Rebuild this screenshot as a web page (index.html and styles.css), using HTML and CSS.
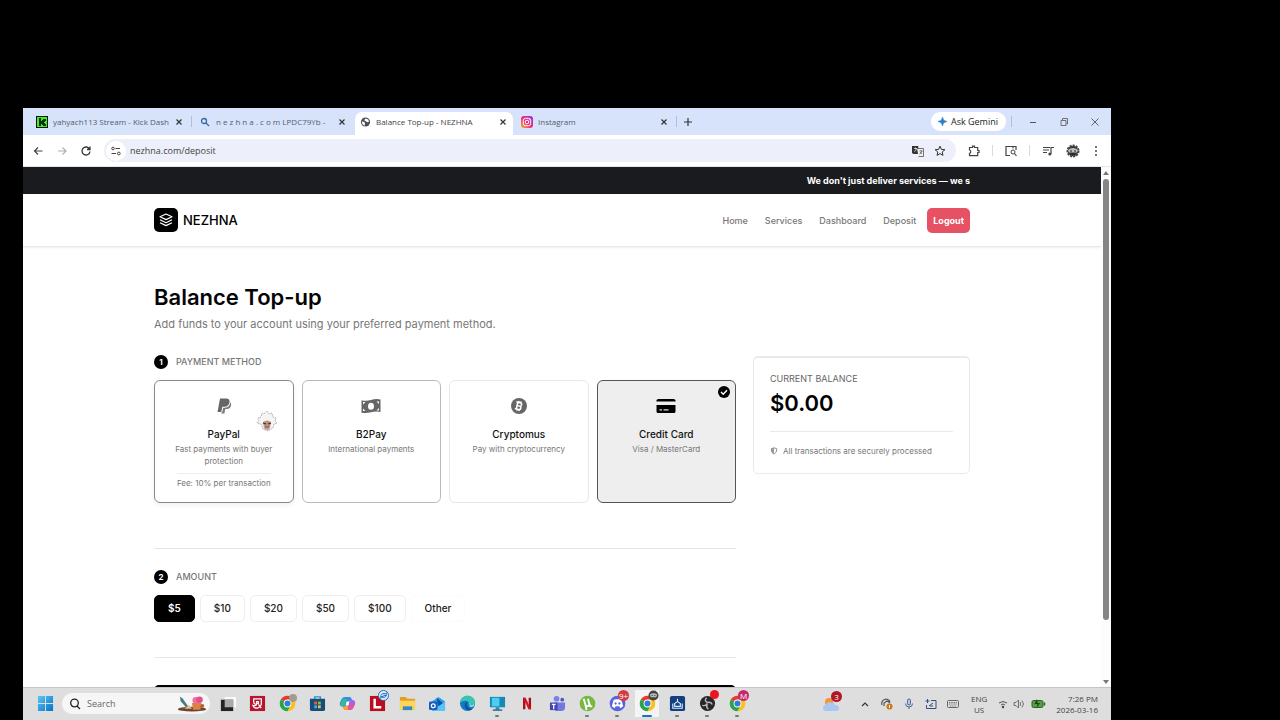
FILE: index.html
```
<!DOCTYPE html>
<html lang="en">
<head>
<meta charset="utf-8">
<title>Balance Top-up - NEZHNA</title>
<link rel="stylesheet" href="styles.css">
</head>
<body>
<svg class="defs" aria-hidden="true">
  <symbol id="close" viewBox="0 0 10 10"><path d="M2.500 2.500l5 5M7.500 2.500l-5 5" fill="none" stroke="currentColor" stroke-width="1.200"/></symbol>
  <symbol id="chrome" viewBox="0 0 24 24">
    <path d="M12 12L2.500 6.500A11 11 0 0 1 21.500 6.500z" fill="#e33b2e"/>
    <path d="M2.500 6.500A11 11 0 0 0 12 23l5-8.500L12 12z" fill="#27a34a"/>
    <path d="M21.500 6.500A11 11 0 0 1 12 23l5-8.500L12 6.500z" fill="#fbc116"/>
    <circle cx="12" cy="12" r="5.500" fill="#fff"/><circle cx="12" cy="12" r="4.300" fill="#2f7de1"/>
  </symbol>
</svg>
<div class="window">
  <div class="tabs">
    <div class="tab">
      <svg class="fav" viewBox="0 0 12 12"><path d="M0 0h12v12H0z" fill="#111"/><path d="M1 1h10v10H1z" fill="#39ef25"/><path d="M3 2h2v3h1V4h1V3h3v2H9v1H8v1h1v1h1v2H7V9H6V8H5v2H3z" fill="#0b3208"/></svg>
      <span class="tab-text">yahyach113 Stream - Kick Dash</span>
      <button class="x" aria-label="Close"><svg><use href="#close"/></svg></button>
    </div>
    <span class="sep"></span>
    <div class="tab">
      <svg class="fav" viewBox="0 0 12 12"><circle cx="5" cy="5" r="2.500" fill="none" stroke="#3b659b" stroke-width="1.300"/><path d="M7 7l3 3" stroke="#3b659b" stroke-width="1.300"/></svg>
      <span class="tab-text">n e z h n a . c o m LPDC79Yb - </span>
      <button class="x" aria-label="Close"><svg><use href="#close"/></svg></button>
    </div>
    <div class="tab active">
      <svg class="fav" viewBox="0 0 12 12"><circle cx="6" cy="6" r="5" fill="#4c4f52"/><path d="M2.200 5.500C3.500 5 5 6 5.500 7.200L5 10C3 9.500 2 8 2.200 5.500zM6 2.200l3 1.200.8 2.200-2 .8L6 5 4.500 4z" fill="#fff"/></svg>
      <span class="tab-text">Balance Top-up - NEZHNA</span>
      <button class="x" aria-label="Close"><svg><use href="#close"/></svg></button>
    </div>
    <div class="tab">
      <svg class="fav" viewBox="0 0 12 12"><defs><linearGradient id="ig" x1="0" y1="1" x2="1" y2="0"><stop offset="0" stop-color="#fdb52c"/><stop offset=".45" stop-color="#f32b74"/><stop offset="1" stop-color="#9b30e8"/></linearGradient></defs><rect width="12" height="12" rx="3" fill="url(#ig)"/><rect x="2.300" y="2.300" width="7.400" height="7.400" rx="2.200" fill="none" stroke="#fff"/><circle cx="6" cy="6" r="1.800" fill="none" stroke="#fff"/><circle cx="8.300" cy="3.800" r=".5" fill="#fff"/></svg>
      <span class="tab-text">Instagram</span>
      <button class="x" aria-label="Close"><svg><use href="#close"/></svg></button>
    </div>
    <span class="sep"></span>
    <button class="x plus" aria-label="New tab"><svg viewBox="0 0 10 10"><path d="M5 1v8M1 5h8" stroke="#333" stroke-width="1.200"/></svg></button>
    <button class="gemini"><svg viewBox="0 0 10 10"><path d="M5 0Q5.500 4.500 10 5Q5.500 5.500 5 10Q4.500 5.500 0 5Q4.500 4.500 5 0z" fill="#2c7fc4" stroke="#2c7fc4" stroke-width=".6"/></svg>Ask Gemini</button>
    <span class="sep"></span>
    <div class="controls">
      <button aria-label="Minimize"><svg viewBox="0 0 10 10"><path d="M2 5.500h6" stroke="#555"/></svg></button>
      <button aria-label="Restore"><svg viewBox="0 0 10 10"><path d="M2 3.500h5v5H2zM3.500 3V1.500H8.500V7H7.500" fill="none" stroke="#555" stroke-width=".8"/></svg></button>
      <button aria-label="Close window"><svg viewBox="0 0 10 10"><path d="M1.500 1.500l7 7M8.500 1.500l-7 7" stroke="#555" stroke-width=".9"/></svg></button>
    </div>
  </div>

  <div class="toolbar">
    <button aria-label="Back"><svg viewBox="0 0 12 12"><path d="M10.500 6H2.500M6 2.500L2.500 6 6 9.500" fill="none" stroke="#444" stroke-width="1.200"/></svg></button>
    <button aria-label="Forward"><svg viewBox="0 0 12 12"><path d="M2 6h8M6.500 2.500L10 6 6.500 9.500" fill="none" stroke="#b0b0b0" stroke-width="1.200"/></svg></button>
    <button aria-label="Reload"><svg viewBox="0 0 12 12"><path d="M9.500 4A4 4 0 1 0 10 6.500M10 1.500V4.500H7" fill="none" stroke="#333" stroke-width="1.300"/></svg></button>
    <div class="omnibox">
      <button class="site" aria-label="Site information"><svg viewBox="0 0 12 12"><circle cx="3" cy="3.500" r="1.300" fill="none" stroke="#444"/><path d="M5.500 3.500H10M1.500 8.500H6" stroke="#444"/><circle cx="8.800" cy="8.500" r="1.400" fill="none" stroke="#444"/></svg></button>
      <input aria-label="Address" value="nezhna.com/deposit">
      <button aria-label="Translate"><svg viewBox="0 0 12 12"><path d="M0 1h6l2 8H1.500L0 8z" fill="#333"/><path d="M5 3.500h6.500V11.500H6.500" fill="#eee" stroke="#555" stroke-width=".8"/><path d="M2 3.500h3M3.500 2.500v1M2.200 6.500Q4 6 4.500 3.500" stroke="#fff" stroke-width=".7" fill="none"/><path d="M7.500 6h3M9 5v1M7.500 9Q9.500 8 10 6M8 7l2 2" stroke="#555" stroke-width=".7" fill="none"/></svg></button>
      <button aria-label="Bookmark"><svg viewBox="0 0 12 12"><path d="M6 1.200l1.400 3.200 3.500.3-2.700 2.300.8 3.400L6 8.600l-3 1.800.8-3.400L1.100 4.700l3.500-.3z" fill="none" stroke="#333"/></svg></button>
    </div>
    <div class="tools">
      <button aria-label="Extensions"><svg viewBox="0 0 12 12"><path d="M1.500 2.500h3V1.200h2V2.500h3.200v3H11v2H9.700v3.200H1.500V8.300a1.700 1.700 0 0 0 0-3.300z" fill="none" stroke="#444" stroke-width="1.200"/></svg></button>
      <span class="sep"></span>
      <button aria-label="Side search"><svg viewBox="0 0 12 12"><path d="M5 10.500H1V1.500H11V5" fill="none" stroke="#444" stroke-width="1.200"/><path d="M8 1.500v2" stroke="#444" stroke-width="1.200"/><circle cx="8" cy="7" r="2" fill="none" stroke="#444"/><path d="M9.500 8.500l2 2.500" stroke="#444" stroke-width="1.200"/></svg></button>
      <span class="sep"></span>
      <button aria-label="Media"><svg viewBox="0 0 12 12"><path d="M1 2.500h7M1 5h6M1 7.500h4M9 9V2.500h3" fill="none" stroke="#444" stroke-width="1.200"/><circle cx="7.800" cy="9" r="1.500" fill="#444"/></svg></button>
      <button class="profile" aria-label="Profile"><svg viewBox="0 0 14 14"><circle cx="7" cy="7" r="5.300" fill="#353737" stroke="#444" stroke-width="2.400" stroke-dasharray="2 1"/><path d="M2 6q5-4 10 0l-1 2.500H3z" fill="#bfc2c2"/><path d="M4 7h2M8 7h2M5 10h4" stroke="#222"/></svg></button>
      <button aria-label="Menu"><svg viewBox="0 0 12 12"><g fill="#444"><circle cx="6" cy="2" r="1"/><circle cx="6" cy="6" r="1"/><circle cx="6" cy="10" r="1"/></g></svg></button>
    </div>
  </div>

  <div class="viewport">
    <div class="page">
      <div class="banner"><div class="container marquee">We don't just deliver services — we s</div></div>
      <header class="header">
        <div class="container bar">
          <a class="brand" href="#"><span class="logo"><svg viewBox="0 0 14 14"><path d="M7 1l6 2.800-6 2.800-6-2.800zM1 6.800l6 2.900 6-2.900M1 9.700l6 2.900 6-2.900" fill="none" stroke="#fff" stroke-width="1.200" stroke-linejoin="round"/></svg></span>NEZHNA</a>
          <nav><a href="#">Home</a><a href="#">Services</a><a href="#">Dashboard</a><a href="#">Deposit</a><a class="logout" href="#">Logout</a></nav>
        </div>
      </header>
      <main class="container">
        <h1>Balance Top-up</h1>
        <p class="sub">Add funds to your account using your preferred payment method.</p>
        <div class="columns">
          <div>
            <section>
              <h2 class="step"><span>1</span>PAYMENT METHOD</h2>
              <div class="methods">
                <button class="method hover">
                  <svg viewBox="0 0 18 18"><path d="M5 1.500h6c2.800 0 4 1.500 3.500 4S12.300 9.800 9.500 9.800H7.300L6.300 15H2.500z" fill="#666"/><path d="M15.300 5.300c.9.900 1 2 .7 3.300-.5 2.400-2 3.500-4.500 3.500h-1.300L9.400 16.500H6.200l.3-1h.7l1-4.800h1.700c3 0 5.100-1.700 5.400-5.400z" fill="#777"/></svg>
                  <strong>PayPal</strong><span>Fast payments with buyer protection</span><small>Fee: 10% per transaction</small>
                </button>
                <button class="method mid">
                  <svg class="wide" viewBox="0 0 20 18"><path d="M.5 3.200Q5 4.500 10 3T19.500 2.500v12.500Q15 14 10 15.300T.500 15.700z" fill="#666"/><ellipse cx="10" cy="9.200" rx="3" ry="3.500" fill="#fff"/><path d="M2 5h2.500L2 7.500zM18 4.500h-2.500l2.500 2.500zM2 14V11.500l2.500 2.500zM18 13.500V11l-2.500 2.500z" fill="#fff"/></svg>
                  <strong>B2Pay</strong><span>International payments</span>
                </button>
                <button class="method">
                  <svg viewBox="0 0 18 18"><circle cx="9" cy="9" r="8" fill="#666"/><g fill="none" stroke="#fff" stroke-width="1.500" transform="rotate(13 9 9)"><path d="M7 5.500v7M5.500 5.500h4a1.700 1.700 0 0 1 0 3.500H7M9.500 9a1.700 1.700 0 0 1 0 3.500h-4M8 4v1.500M10 4v1.500M8 12.500V14M10 12.500V14"/></g></svg>
                  <strong>Cryptomus</strong><span>Pay with cryptocurrency</span>
                </button>
                <button class="method selected" aria-pressed="true">
                  <svg class="wide" viewBox="0 0 20 18"><path d="M.5 4.500A2 2 0 0 1 2.500 2h15a2 2 0 0 1 2 2.500zM.5 8h19v6.500a1.500 1.500 0 0 1-1.500 1.500H2a1.500 1.500 0 0 1-1.500-1.500z"/><path d="M3.500 12.800h2.500M7.500 12.800h5" stroke="#ddd" stroke-width="1.200"/></svg>
                  <strong>Credit Card</strong><span>Visa / MasterCard</span>
                  <svg class="check" viewBox="0 0 12 12"><circle cx="6" cy="6" r="6"/><path d="M3 6l2.200 2.200L9 4.200" fill="none" stroke="#fff" stroke-width="1.500"/></svg>
                </button>
                <svg class="cursor" viewBox="0 0 22 22"><path d="M1 13l2-3-1-2 3-1 1-4 2 1 3-3 2 3 3-1 1 4 3 1-1 3 2 2-3 1-1 4-5 3-5-2-2-5z" fill="#f5f5f3" stroke="#888" stroke-width=".7" stroke-dasharray="1.500 1"/><path d="M7 12q4-3 8 0l-1 6q-3 3-6 0z" fill="#c1907e"/><path d="M7 13l3 1M12 14l3-1" stroke="#333" stroke-width="1.300"/><path d="M8 17q3-2 6 0l-1 3H9z" fill="#c9a59a"/><path d="M9 17h4" stroke="#744"/></svg>
              </div>
            </section>
            <section class="next">
              <h2 class="step"><span>2</span>AMOUNT</h2>
              <div class="amounts">
                <button class="chosen">$5</button><button>$10</button><button>$20</button><button>$50</button><button>$100</button><button class="other">Other</button>
              </div>
            </section>
            <section class="pay"><button class="submit" aria-label="Continue"></button></section>
          </div>
          <aside class="balance">
            <div class="label">CURRENT BALANCE</div>
            <div class="total">$0.00</div>
            <div class="secure"><svg viewBox="0 0 10 10"><path d="M5 1l3.500 1.200q.3 4.800-3.500 6.800Q1.200 7 1.500 2.200z" fill="none" stroke="#777"/><path d="M5 1v8Q1.200 7 1.500 2.200z" fill="#999"/></svg>All transactions are securely processed</div>
          </aside>
        </div>
      </main>
    </div>
    <div class="scroll"><i class="up"></i><i class="thumb"></i><i class="down"></i></div>
  </div>

  <footer class="taskbar">
    <button class="app" aria-label="Start"><svg viewBox="0 0 18 18"><defs><linearGradient id="win" x1="0" y1="0" x2="1" y2="1"><stop offset="0" stop-color="#58c8f2"/><stop offset="1" stop-color="#0871cb"/></linearGradient></defs><path d="M1 1h7.500v7.500H1zM9.500 1H17v7.500H9.500zM1 9.500h7.500V17H1zM9.500 9.500H17V17H9.500z" fill="url(#win)"/></svg></button>
    <label class="search"><svg class="lens" viewBox="0 0 12 12"><circle cx="5.500" cy="5" r="3.800" fill="none" stroke="#222" stroke-width="1.300"/><path d="M8 8l3 3" stroke="#222" stroke-width="1.300"/></svg>
      <input aria-label="Search" placeholder="Search">
      <svg class="art" viewBox="0 0 32 18"><ellipse cx="16" cy="14.500" rx="15" ry="2.500" fill="#704530"/><path d="M3 1l3 2 7 10-2 1L4 6z" fill="#437b86"/><path d="M16 8h10l-1 7h-8z" fill="#d98243"/><path d="M26 9q5 0 2 4h-4" fill="#b4622f"/><circle cx="20" cy="5" r="3.500" fill="#ef6da3"/><circle cx="24" cy="4.500" r="3.500" fill="#e0508c"/><path d="M8 14l5-4 3 4z" fill="#e8be8c"/></svg></label>
    <button class="app" aria-label="Task view"><svg viewBox="0 0 18 18"><path d="M6 2h12v11h-3V5H6z" fill="#fafafa"/><path d="M2 5h13v12H2z" fill="#222"/><path d="M6 5h9v8H6z" fill="#aaa"/></svg></button>
    <button class="app" aria-label="Game"><svg viewBox="0 0 18 18"><path d="M1 1h16v16H1z" fill="#b9142c"/><path d="M5 4h8v6q-1 3-4 4-4 0-5-3 3 1 4-1-3 0-3-3zM8 7h2v2H8zM10 10l3 4" fill="none" stroke="#fff" stroke-width="1.300"/></svg></button>
    <button class="app" aria-label="Chrome"><svg><use href="#chrome"/></svg><i class="badge grey"></i></button>
    <button class="app" aria-label="Store"><svg viewBox="0 0 18 18"><path d="M6 5V2h6v3" fill="none" stroke="#2694d1" stroke-width="1.500"/><path d="M1 4h16v11q0 2-2 2H3q-2 0-2-2z" fill="#174d7d"/><path d="M5.500 7h3v3h-3z" fill="#f05b38"/><path d="M9.500 7h3v3h-3z" fill="#85bd38"/><path d="M5.500 11h3v3h-3z" fill="#39b1e7"/><path d="M9.500 11h3v3h-3z" fill="#fabd31"/></svg></button>
    <button class="app" aria-label="Copilot"><svg viewBox="0 0 18 18"><path d="M6 2h6l2 3-4 2-3 6-5-1Q0 10 1 8l2-4q1-2 3-2z" fill="#2a93e2"/><path d="M2 8l3-4 3 0-2 8H3q-2-1-1-4z" fill="#35bd8c"/><path d="M12 16H6l-2-3 4-2 3-6 5 1q2 2 1 4l-2 4q-1 2-3 2z" fill="#e0569e"/><path d="M12 5q5 0 5 3l-3 3-4-1z" fill="#a064eb"/><path d="M4 13l4-2 2 2-1 3H6z" fill="#f6a434"/><path d="M8 7h3l-1 4H7z" fill="#fff"/></svg></button>
    <button class="app" aria-label="Launcher"><svg viewBox="0 0 18 18"><path d="M1 1h16v16H1z" fill="#bd0b20"/><path d="M6 4v9h7" fill="none" stroke="#fff" stroke-width="2.600"/></svg><svg class="sync" viewBox="0 0 12 12"><circle cx="6" cy="6" r="5.500" fill="#d8e9fa" stroke="#1767ba"/><path d="M3 6q1-3 5-2l1-1v3H6M9 6q-1 3-5 2L3 9V7h3" fill="none" stroke="#1767ba"/></svg></button>
    <button class="app" aria-label="Files"><svg viewBox="0 0 18 18"><path d="M1 2h6l2 2h8v12H1z" fill="#dda020"/><path d="M1 6h16v10H1z" fill="#ffd45b"/><path d="M4 12h10v4H4z" fill="#3689c8"/></svg></button>
    <button class="app" aria-label="Outlook"><svg viewBox="0 0 18 18"><path d="M3 7l7-5 7 5v8q0 2-2 2H5q-2 0-2-2z" fill="#2aa1ec"/><path d="M8 3l7 6-5 3z" fill="#104fa5"/><path d="M6 15l11-8v8q0 2-2 2H5z" fill="#5bc4f6"/><rect y="7" width="9" height="9" rx="1.500" fill="#175dbb"/><circle cx="4.500" cy="11.500" r="2" fill="none" stroke="#fff" stroke-width="1.300"/></svg></button>
    <button class="app" aria-label="Edge"><svg viewBox="0 0 18 18"><circle cx="9" cy="9" r="8" fill="#1677c4"/><path d="M1 9a8 8 0 0 1 16-1q0 4-4 4-3 0-2-2.500Q10 6 7 6 2 6 1 9z" fill="#38c6b2"/><path d="M8 7q-4 4 0 8 3 2 6 0-7 0-6-8z" fill="#0b4d96"/><path d="M10 8q3 2 1 4 3 1 5-1v-1q-2 2-4 1z" fill="#e4f5fa"/></svg></button>
    <button class="app running" aria-label="Computer"><svg viewBox="0 0 18 18"><path d="M1 2h16v11H1z" fill="#1689bb"/><path d="M3 3h8v9H3z" fill="#4dcef1"/><path d="M7 13h4v2h3v2H4v-2h3z" fill="#3484a7"/></svg></button>
    <button class="app" aria-label="Netflix"><svg viewBox="0 0 18 18"><path d="M5.500 3v12M11.500 3v12" stroke="#a90f19" stroke-width="2.500"/><path d="M4.300 3H7l5.700 12H10z" fill="#d4141f"/></svg></button>
    <button class="app" aria-label="Teams"><svg viewBox="0 0 18 18"><circle cx="8" cy="4" r="3" fill="#7a80eb"/><circle cx="14" cy="5" r="2" fill="#5157b7"/><path d="M5 8h12v5q0 4-4 4H8q-3 0-3-4z" fill="#7378df"/><path d="M1 8h8v8H1z" fill="#4147af"/><path d="M3 10h4M5 10v5" stroke="#fff" stroke-width="1.300"/></svg></button>
    <button class="app running" aria-label="Torrent"><svg viewBox="0 0 18 18"><circle cx="9" cy="9" r="8.300" fill="#77b843"/><path d="M5 4l2 7q3 2 4-1L9.500 4M11 9l1 3h2M7 11l1 5" fill="none" stroke="#fff" stroke-width="2"/></svg></button>
    <button class="app running" aria-label="Discord"><svg viewBox="0 0 18 18"><circle cx="9" cy="9" r="8.300" fill="#5865df"/><path d="M5 5l3-.5h2l3 .5 2 7-3 2-1-2H7l-1 2-3-2z" fill="#fff"/><circle cx="7" cy="9" r="1.200" fill="#5865df"/><circle cx="11" cy="9" r="1.200" fill="#5865df"/></svg><i class="badge red">9+</i></button>
    <button class="app running current" aria-label="Chrome"><svg><use href="#chrome"/></svg><svg class="sync" viewBox="0 0 12 12"><circle cx="6" cy="6" r="5.500" fill="#444"/><path d="M2 5q4-3 8 0l-1 3H3z" fill="#bbb"/><path d="M4 6h1M7 6h1" stroke="#222"/></svg></button>
    <button class="app running" aria-label="Control"><svg viewBox="0 0 18 18"><rect x="1" y="1" width="16" height="16" rx="2" fill="#123f7e"/><path d="M4 9v5h10V9M6 12V9l3-2 3 2v3zM9 4v3" fill="none" stroke="#d7ebff" stroke-width="1.200"/></svg></button>
    <button class="app running" aria-label="OBS"><svg viewBox="0 0 18 18"><circle cx="9" cy="9" r="8" fill="#272629"/><path d="M8 3q-3 3 1 5 4-1 5 2M3.500 11q4 1 5-2M10 15q-3-2-1-5" fill="none" stroke="#bbb" stroke-width="1.500"/></svg><i class="badge live"></i></button>
    <button class="app running" aria-label="Chrome M"><svg><use href="#chrome"/></svg><i class="badge pink">M</i></button>
    <div class="tray">
      <span class="weather"><svg viewBox="0 0 18 18"><circle cx="7" cy="7" r="4" fill="#f29640"/><path d="M4 16q-3 0-3-3t3-3q2-5 6-2 2-1 3 2 4 0 4 3t-3 3z" fill="#a9c7f0"/></svg><i class="badge deep">3</i></span>
      <svg viewBox="0 0 12 12"><path d="M3 8l3-3 3 3" fill="none" stroke="#333" stroke-width="1.200"/></svg>
      <svg viewBox="0 0 12 12"><path d="M1 7a4 4 0 0 1 8-3M3 8V5l3-2 3 2" fill="none" stroke="#555" stroke-width="1.200"/><circle cx="8.500" cy="8.500" r="3" fill="#c87711"/><path d="M8.500 7v3" stroke="#fff"/></svg>
      <svg viewBox="0 0 12 12"><rect x="4.500" y="1" width="3" height="6" rx="1.500" fill="#b9c8df" stroke="#4d6795"/><path d="M2.500 5.500q0 3.500 3.500 3.500t3.500-3.500M6 9v2" fill="none" stroke="#4d6795"/></svg>
      <svg viewBox="0 0 12 12"><path d="M6 2.500h5v8H1.500V7" fill="none" stroke="#315180"/><path d="M2.500 1v4M.5 3h4M4 8l4-3M8 8H5" stroke="#315180"/></svg>
      <svg viewBox="0 0 12 12"><rect x=".5" y="2.500" width="11" height="7" rx="1" fill="none" stroke="#666"/><path d="M2 4.500h8M2 6h8M3 8h6" stroke="#777" stroke-dasharray="1 .7"/></svg>
      <div class="lang">ENG<br>US</div>
      <svg viewBox="0 0 12 12"><path d="M2 5q4-3 8 0M4 7q2-2 4 0" fill="none" stroke="#555"/><circle cx="6" cy="9" r="1.200" fill="#444"/></svg>
      <svg class="sound" viewBox="0 0 12 12"><path d="M1 4.500h2L5.500 2v8L3 7.500H1zM7 4q1.500 2 0 4M9 2.500q3 3.500 0 7" fill="none" stroke="#666" stroke-width=".9"/></svg>
      <svg class="battery" viewBox="0 0 15 12"><rect x="1" y="2.500" width="11" height="7" rx="1.500" fill="#52a23b" stroke="#315f27"/><path d="M13.500 4.500v3" stroke="#315f27" stroke-width="1.500"/><path d="M6 1L3.500 6h3L5.500 10 9 5H6.500z" fill="#1e4319"/></svg>
      <div class="clock">7:26 PM<br>2026-03-16</div>
    </div>
  </footer>
</div>
</body>
</html>
```
FILE: styles.css
```
* { box-sizing: border-box; }
html { height: 100%; }
body { margin: 0; height: 100%; background: #000; padding: 108px 169px 0 23px; font-family: "Open Sans", "Noto Sans", sans-serif; }
button { font: inherit; color: inherit; border: 0; background: none; padding: 0; }
a { color: inherit; text-decoration: none; }
svg { display: block; flex: none; }
i { font-style: normal; }
.defs { position: absolute; width: 0; height: 0; }
.window { height: 100%; display: flex; flex-direction: column; background: #fff; overflow: hidden; }

.tabs { display: flex; align-items: center; flex: none; height: 27px; padding: 0 3px 0 6px; background: #d7e3fb; font-size: 8px; color: #555d6a; }
.tab { display: flex; align-items: center; flex: 0 1 162px; min-width: 0; height: 23px; align-self: flex-end; padding: 0 7px 4px 7px; gap: 5px; }
.tab.active { background: #fff; border-radius: 7px 7px 0 0; flex-basis: 158px; margin: 0 1px 0 1px; padding: 0 5px 4px; color: #444; }
.fav { width: 12px; height: 12px; }
.active .fav { width: 11px; }
.tab-text { flex: 1; white-space: nowrap; min-width: 0; }
.x { color: #333; }
.x svg { width: 10px; height: 10px; }
.plus { padding: 0 6px; }
.sep { width: 1px; height: 11px; background: #b3bfd6; flex: none; }
.gemini { display: flex; align-items: center; gap: 4px; height: 19px; padding: 0 8px 0 7px; margin: 0 5px 0 auto; background: #fff; border-radius: 9px; color: #222; font-size: 9px; }
.gemini svg { width: 9px; height: 9px; }
.controls { display: flex; gap: 21px; padding: 0 8px 0 16px; }
.controls svg { width: 10px; height: 10px; }

.toolbar { display: flex; align-items: center; flex: none; gap: 12px; height: 32px; padding: 0 9px; border-bottom: 1px solid #e4e5e9; }
.toolbar svg { width: 12px; height: 12px; }
.toolbar .sep { background: #d5dbe8; }
.omnibox { flex: 1; display: flex; align-items: center; gap: 10px; height: 23px; padding: 0 10px 0 2px; border-radius: 12px; background: #edeffa; }
.omnibox input { flex: 1; min-width: 0; border: 0; padding: 0; background: none; font: 9px "Open Sans", sans-serif; color: #444; }
.site { background: #fff; border-radius: 50%; padding: 4px; margin-right: -6px; }
.tools { display: flex; align-items: center; gap: 12px; }
.tools .profile { margin-right: -2px; }
.tools .profile svg { width: 14px; height: 14px; }

.viewport { flex: 1; min-height: 0; display: flex; }
.page { flex: 1; min-width: 0; overflow: hidden; font-family: Inter, sans-serif; }
.scroll { width: 10px; display: flex; flex-direction: column; align-items: center; gap: 4px; padding: 4px 0 3px; background: #fcfcfc; }
.thumb { width: 6px; flex: 0 1 86%; border-radius: 3px; background: #858585; }
.up, .down { border: 3px solid transparent; }
.up { border-bottom: 4px solid #777; border-top: 0; }
.down { border-top: 4px solid #777; border-bottom: 0; margin-top: auto; }
.container { width: calc(100% - 32px); max-width: 816px; margin: 0 auto; }
.banner { background: #1a1b1e; padding-top: 1px; }
.marquee { white-space: nowrap; text-align: right; color: #fff; font-size: 9px; font-weight: 700; line-height: 26px; }
.header { border-bottom: 1px solid #e8e8e8; box-shadow: 0 1px 2px #0001; }
.bar { display: flex; align-items: center; justify-content: space-between; height: 52px; }
.brand { display: flex; align-items: center; gap: 5px; font-size: 13px; font-weight: 500; color: #000; }
.logo { background: #000; border-radius: 5px; padding: 5px; }
.logo svg { width: 14px; height: 14px; }
nav { display: flex; gap: 5px; font-size: 9px; font-weight: 500; line-height: 25px; color: #777; }
nav a { padding: 0 6px; }
nav .logout { background: #e65164; color: #fff; border-radius: 5px; font-weight: 700; }

main { padding-top: 36px; }
h1 { margin: 0; font-size: 22px; line-height: 28px; font-weight: 600; color: #050505; }
.sub { margin: 4px 0 22px; font-size: 11px; line-height: 18px; color: #777; }
.columns { display: grid; grid-template-columns: minmax(0, 1fr) 217px; gap: 17px; align-items: start; }
.step { display: flex; align-items: center; gap: 8px; margin: 0 0 11px; font-size: 9px; line-height: 14px; font-weight: 500; color: #777; }
.step span { width: 14px; border-radius: 50%; background: #000; color: #fff; text-align: center; font-size: 8px; font-weight: 700; }
.methods { position: relative; display: grid; grid-template-columns: repeat(4, 1fr); gap: 8px; }
.method { position: relative; display: flex; flex-direction: column; align-items: center; justify-content: flex-start; padding: 16px 14px 13px; border: 1px solid #e8e8e8; border-radius: 6px; font-size: 8px; line-height: 12px; color: #777; }
.method > svg { width: 18px; height: 18px; }
.method > .wide { width: 20px; }
.method strong { margin: 12px 0 2px; font-size: 10px; line-height: 14px; font-weight: 500; color: #111; }
.method small { margin-top: 6px; padding-top: 3px; border-top: 1px solid #eee; font-size: 8px; white-space: nowrap; }
.method.hover { border-color: #888; box-shadow: 0 2px 5px #0001; }
.method.mid { border-color: #bbb; }
.method.selected { border-color: #555; background: #eee; }
.method > .check { position: absolute; top: 5px; right: 5px; width: 12px; height: 12px; }
.cursor { position: absolute; left: 102px; top: 30px; width: 22px; height: 22px; }
.next { margin-top: 45px; padding-top: 21px; border-top: 1px solid #e5e5e5; }
.amounts { display: flex; gap: 5px; }
.amounts button { height: 27px; padding: 0 13px 1px; border: 1px solid #eee; border-radius: 5px; font-size: 10px; font-weight: 500; color: #222; }
.amounts .chosen { background: #000; border-color: #000; color: #fff; font-weight: 600; }
.amounts .other { border-color: #fbfbfb; }
.pay { margin-top: 35px; padding-top: 27px; border-top: 1px solid #e8e8e8; }
.submit { display: block; width: 100%; height: 32px; border-radius: 5px; background: #000; }
.balance { margin-top: 1px; padding: 15px 16px 16px; border: 1px solid #eaeaea; border-top-width: 2px; border-radius: 5px; color: #666; }
.label { font-size: 9px; line-height: 12px; }
.total { margin: 4px 0 14px; font-size: 22px; line-height: 28px; font-weight: 600; color: #000; }
.secure { display: flex; align-items: center; gap: 5px; padding-top: 13px; border-top: 1px solid #eaeaea; font-size: 8px; line-height: 12px; color: #777; }
.secure svg { width: 8px; height: 8px; }

.taskbar { display: flex; align-items: center; flex: none; height: 33px; padding: 0 13px 1px 7px; background: #dedede; border-top: 1px solid #c5c5c5; }
.app { position: relative; display: grid; place-items: center; width: 30px; height: 27px; flex: none; }
.app > svg { width: 17px; height: 17px; }
.search { display: flex; align-items: center; gap: 6px; width: 148px; height: 21px; margin: 0 2px; padding: 0 3px 0 7px; border-radius: 10px; background: #f6f6f6; }
.search input { flex: 1; min-width: 0; padding: 0; border: 0; background: none; font: 9px "Open Sans", sans-serif; }
.search input::placeholder { color: #666; }
.lens { width: 12px; height: 12px; }
.art { width: 30px; height: 18px; }
.badge { position: absolute; top: 0; right: 3px; width: 11px; height: 11px; border-radius: 50%; color: #fff; font-size: 8px; line-height: 11px; text-align: center; }
.grey { top: 4px; right: 5px; width: 8px; height: 8px; background: #a29b91; }
.red { background: #d13c43; }
.live { width: 9px; height: 9px; background: #ed1420; }
.pink { background: #c52a68; }
.deep { background: #b01725; right: 2px; }
.app > .sync { position: absolute; top: 0; right: 3px; width: 11px; height: 11px; }
.running::after { content: ""; position: absolute; left: 13px; bottom: 0; width: 4px; height: 2px; border-radius: 1px; background: #777; }
.current { background: linear-gradient(#f4f4f4, #f4f4f4) center / 24px 100% no-repeat; }
.current::after { left: 10px; width: 10px; background: #1673bd; }
.tray { display: flex; align-items: center; gap: 10px; margin-left: auto; color: #444; font-size: 8px; line-height: 11px; }
.tray > svg { width: 12px; height: 12px; }
.tray > .battery { width: 15px; }
.weather { position: relative; padding: 4px; margin-right: 5px; }
.weather svg { width: 18px; height: 18px; }
.lang { text-align: center; margin-left: 2px; }
.lang + svg { margin-right: -6px; }
.sound { margin-right: -4px; }
.clock { text-align: right; }
```
